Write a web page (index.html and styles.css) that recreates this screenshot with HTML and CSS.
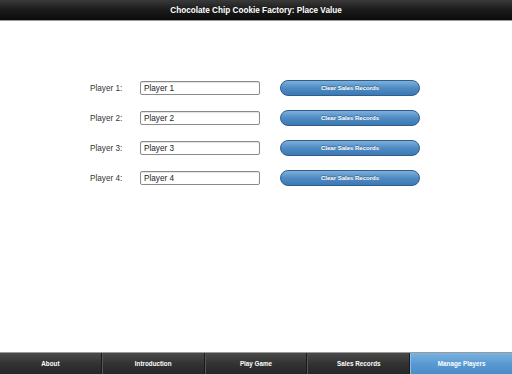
FILE: index.html
```html
<!DOCTYPE html>
<html>
<head>
<meta charset="utf-8">
<link rel="stylesheet" href="styles.css">
</head>
<body>
<div class="app">
  <header class="titlebar">Chocolate Chip Cookie Factory: Place Value</header>
  <main class="content">
    <div class="row">
      <span class="label">Player 1:</span>
      <input class="name" type="text" value="Player 1">
      <button class="clear">Clear Sales Records</button>
    </div>
    <div class="row">
      <span class="label">Player 2:</span>
      <input class="name" type="text" value="Player 2">
      <button class="clear">Clear Sales Records</button>
    </div>
    <div class="row">
      <span class="label">Player 3:</span>
      <input class="name" type="text" value="Player 3">
      <button class="clear">Clear Sales Records</button>
    </div>
    <div class="row">
      <span class="label">Player 4:</span>
      <input class="name" type="text" value="Player 4">
      <button class="clear">Clear Sales Records</button>
    </div>
  </main>
  <nav class="tabbar">
    <div class="tab">About</div>
    <div class="tab">Introduction</div>
    <div class="tab">Play Game</div>
    <div class="tab">Sales Records</div>
    <div class="tab active">Manage Players</div>
  </nav>
</div>
</body>
</html>
```
FILE: styles.css
```css
html, body {
  margin: 0;
  padding: 0;
  height: 100%;
  background: #ffffff;
  font-family: "Liberation Sans", Arial, sans-serif;
}
.app {
  display: flex;
  flex-direction: column;
  height: 374px;
  width: 512px;
}
.titlebar {
  height: 20px;
  background: linear-gradient(#3a3a3a, #1a1a1a 50%, #0c0c0c);
  border-bottom: 1px solid #9a9a9a;
  color: #ffffff;
  font-weight: bold;
  font-size: 8.2px;
  display: flex;
  align-items: center;
  justify-content: center;
  flex: none;
}
.content {
  flex: 1;
  display: flex;
  flex-direction: column;
  gap: 14px;
  padding-top: 59px;
  padding-left: 90px;
}
.row {
  display: flex;
  align-items: center;
  height: 16px;
}
.label {
  width: 50px;
  font-size: 8.2px;
  color: #333333;
}
.name {
  box-sizing: border-box;
  width: 120px;
  height: 14px;
  margin: 0;
  padding: 0 3px;
  border: 1px solid #8a8a8a;
  border-radius: 2px;
  font-family: "Liberation Sans", Arial, sans-serif;
  font-size: 8.2px;
  color: #222222;
  background: #ffffff;
  box-shadow: inset 0 1px 1px rgba(0,0,0,0.12);
}
.clear {
  margin: 0 0 0 20px;
  box-sizing: border-box;
  width: 140px;
  height: 16px;
  padding: 0;
  border: 1px solid #2e5e8e;
  border-radius: 8px;
  background: linear-gradient(#7eb0dc, #4f8bc3 50%, #3c78b2);
  color: #ffffff;
  font-family: "Liberation Sans", Arial, sans-serif;
  font-weight: bold;
  font-size: 6px;
  text-shadow: 0 -1px 0 rgba(0,0,0,0.3);
}
.tabbar {
  flex: none;
  height: 21px;
  display: flex;
  border-top: 1px solid #9a9a9a;
  background: #2a2a2a;
}
.tab {
  flex: 1;
  display: flex;
  align-items: center;
  justify-content: center;
  color: #ffffff;
  font-weight: bold;
  font-size: 6.3px;
  background: linear-gradient(#4a4a4a, #333333 50%, #262626);
  border-right: 1px solid #1a1a1a;
  border-left: 1px solid #555555;
}
.tab:first-child { border-left: none; }
.tab:last-child { border-right: none; }
.tab.active {
  background: linear-gradient(#7ab2e0, #5a9ad2 50%, #4a8cc8);
  border-left: 1px solid #8cc0ea;
}
```
